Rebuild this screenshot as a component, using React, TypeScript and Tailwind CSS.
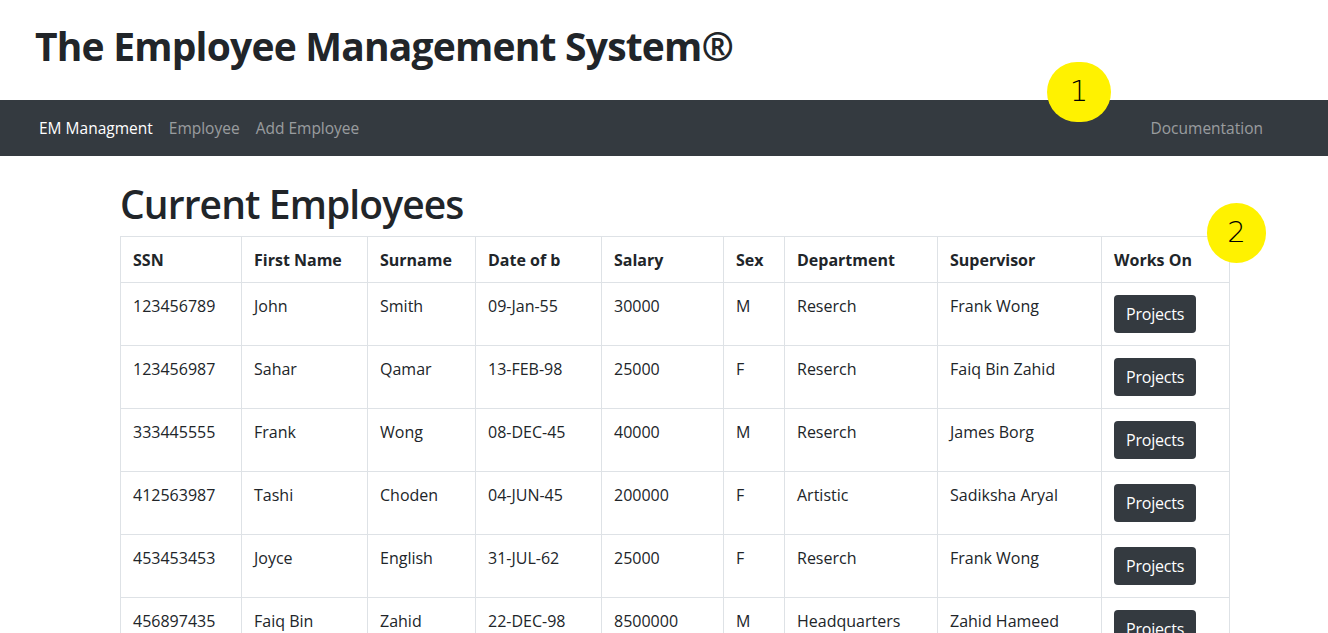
const EMPLOYEES = [
  { ssn: '123456789', first: 'John', last: 'Smith', dob: '09-Jan-55', salary: '30000', sex: 'M', dept: 'Reserch', sup: 'Frank Wong' },
  { ssn: '123456987', first: 'Sahar', last: 'Qamar', dob: '13-FEB-98', salary: '25000', sex: 'F', dept: 'Reserch', sup: 'Faiq Bin Zahid' },
  { ssn: '333445555', first: 'Frank', last: 'Wong', dob: '08-DEC-45', salary: '40000', sex: 'M', dept: 'Reserch', sup: 'James Borg' },
  { ssn: '412563987', first: 'Tashi', last: 'Choden', dob: '04-JUN-45', salary: '200000', sex: 'F', dept: 'Artistic', sup: 'Sadiksha Aryal' },
  { ssn: '453453453', first: 'Joyce', last: 'English', dob: '31-JUL-62', salary: '25000', sex: 'F', dept: 'Reserch', sup: 'Frank Wong' },
  { ssn: '456897435', first: 'Faiq Bin', last: 'Zahid', dob: '22-DEC-98', salary: '8500000', sex: 'M', dept: 'Headquarters', sup: 'Zahid Hameed' },
];

const HEADERS = ['SSN', 'First Name', 'Surname', 'Date of b', 'Salary', 'Sex', 'Department', 'Supervisor', 'Works On'];

function Marker({ n, className }: { n: string; className: string }) {
  return (
    <div
      className={`absolute z-10 rounded-full bg-[#fff200] flex items-center justify-center text-black font-light text-[29px] font-['DejaVu_Sans',sans-serif] ${className}`}
    >
      {n}
    </div>
  );
}

export default function App() {
  return (
    <div className="relative min-h-[633px] bg-white text-[#212529] font-['Open_Sans',sans-serif]">
      {/* Brand */}
      <header className="h-[100px] pt-[22px] pl-[35px]">
        <h1 className="text-[39px] leading-[48px] font-bold tracking-[-0.8px]">
          The Employee Management System®
        </h1>
      </header>

      {/* Navbar */}
      <nav className="h-14 bg-[#343a40] flex items-center pl-[39px] pr-[65px] pt-[2px] text-[15.5px]">
        <div className="flex items-center gap-4">
          <a className="text-white cursor-pointer">EM Managment</a>
          <a className="text-white/50 cursor-pointer">Employee</a>
          <a className="text-white/50 cursor-pointer">Add Employee</a>
        </div>
        <a className="ml-auto text-white/50 cursor-pointer">Documentation</a>
      </nav>

      <Marker n="1" className="left-[1047px] top-[62px] w-[64px] h-[60px]" />
      <Marker n="2" className="left-[1207px] top-[203px] w-[59px] h-[60px]" />

      {/* Content */}
      <main className="pt-6 pl-[120px]">
        <h2 className="text-[39px] leading-[48px] font-semibold tracking-[-0.9px] mb-2">Current Employees</h2>
        <table className="w-[1109px] table-fixed border-collapse text-base leading-6">
          <colgroup>
            <col className="w-[121px]" />
            <col className="w-[126px]" />
            <col className="w-[108px]" />
            <col className="w-[126px]" />
            <col className="w-[122px]" />
            <col className="w-[61px]" />
            <col className="w-[153px]" />
            <col className="w-[164px]" />
            <col className="w-[128px]" />
          </colgroup>
          <thead>
            <tr>
              {HEADERS.map(h => (
                <th key={h} className="border border-[#dee2e6] px-3 pt-[11px] pb-[10px] text-left font-bold whitespace-nowrap">
                  {h}
                </th>
              ))}
            </tr>
          </thead>
          <tbody>
            {EMPLOYEES.map(e => (
              <tr key={e.ssn}>
                {[e.ssn, e.first, e.last, e.dob, e.salary, e.sex, e.dept, e.sup].map((v, i) => (
                  <td key={i} className="border border-[#dee2e6] px-3 pt-[11px] pb-3 align-top whitespace-nowrap">
                    {v}
                  </td>
                ))}
                <td className="border border-[#dee2e6] px-3 py-3 align-top">
                  <button className="h-[38px] px-3 rounded bg-[#343a40] text-white text-base leading-6 tracking-[-0.2px]">
                    Projects
                  </button>
                </td>
              </tr>
            ))}
          </tbody>
        </table>
      </main>
    </div>
  );
}
